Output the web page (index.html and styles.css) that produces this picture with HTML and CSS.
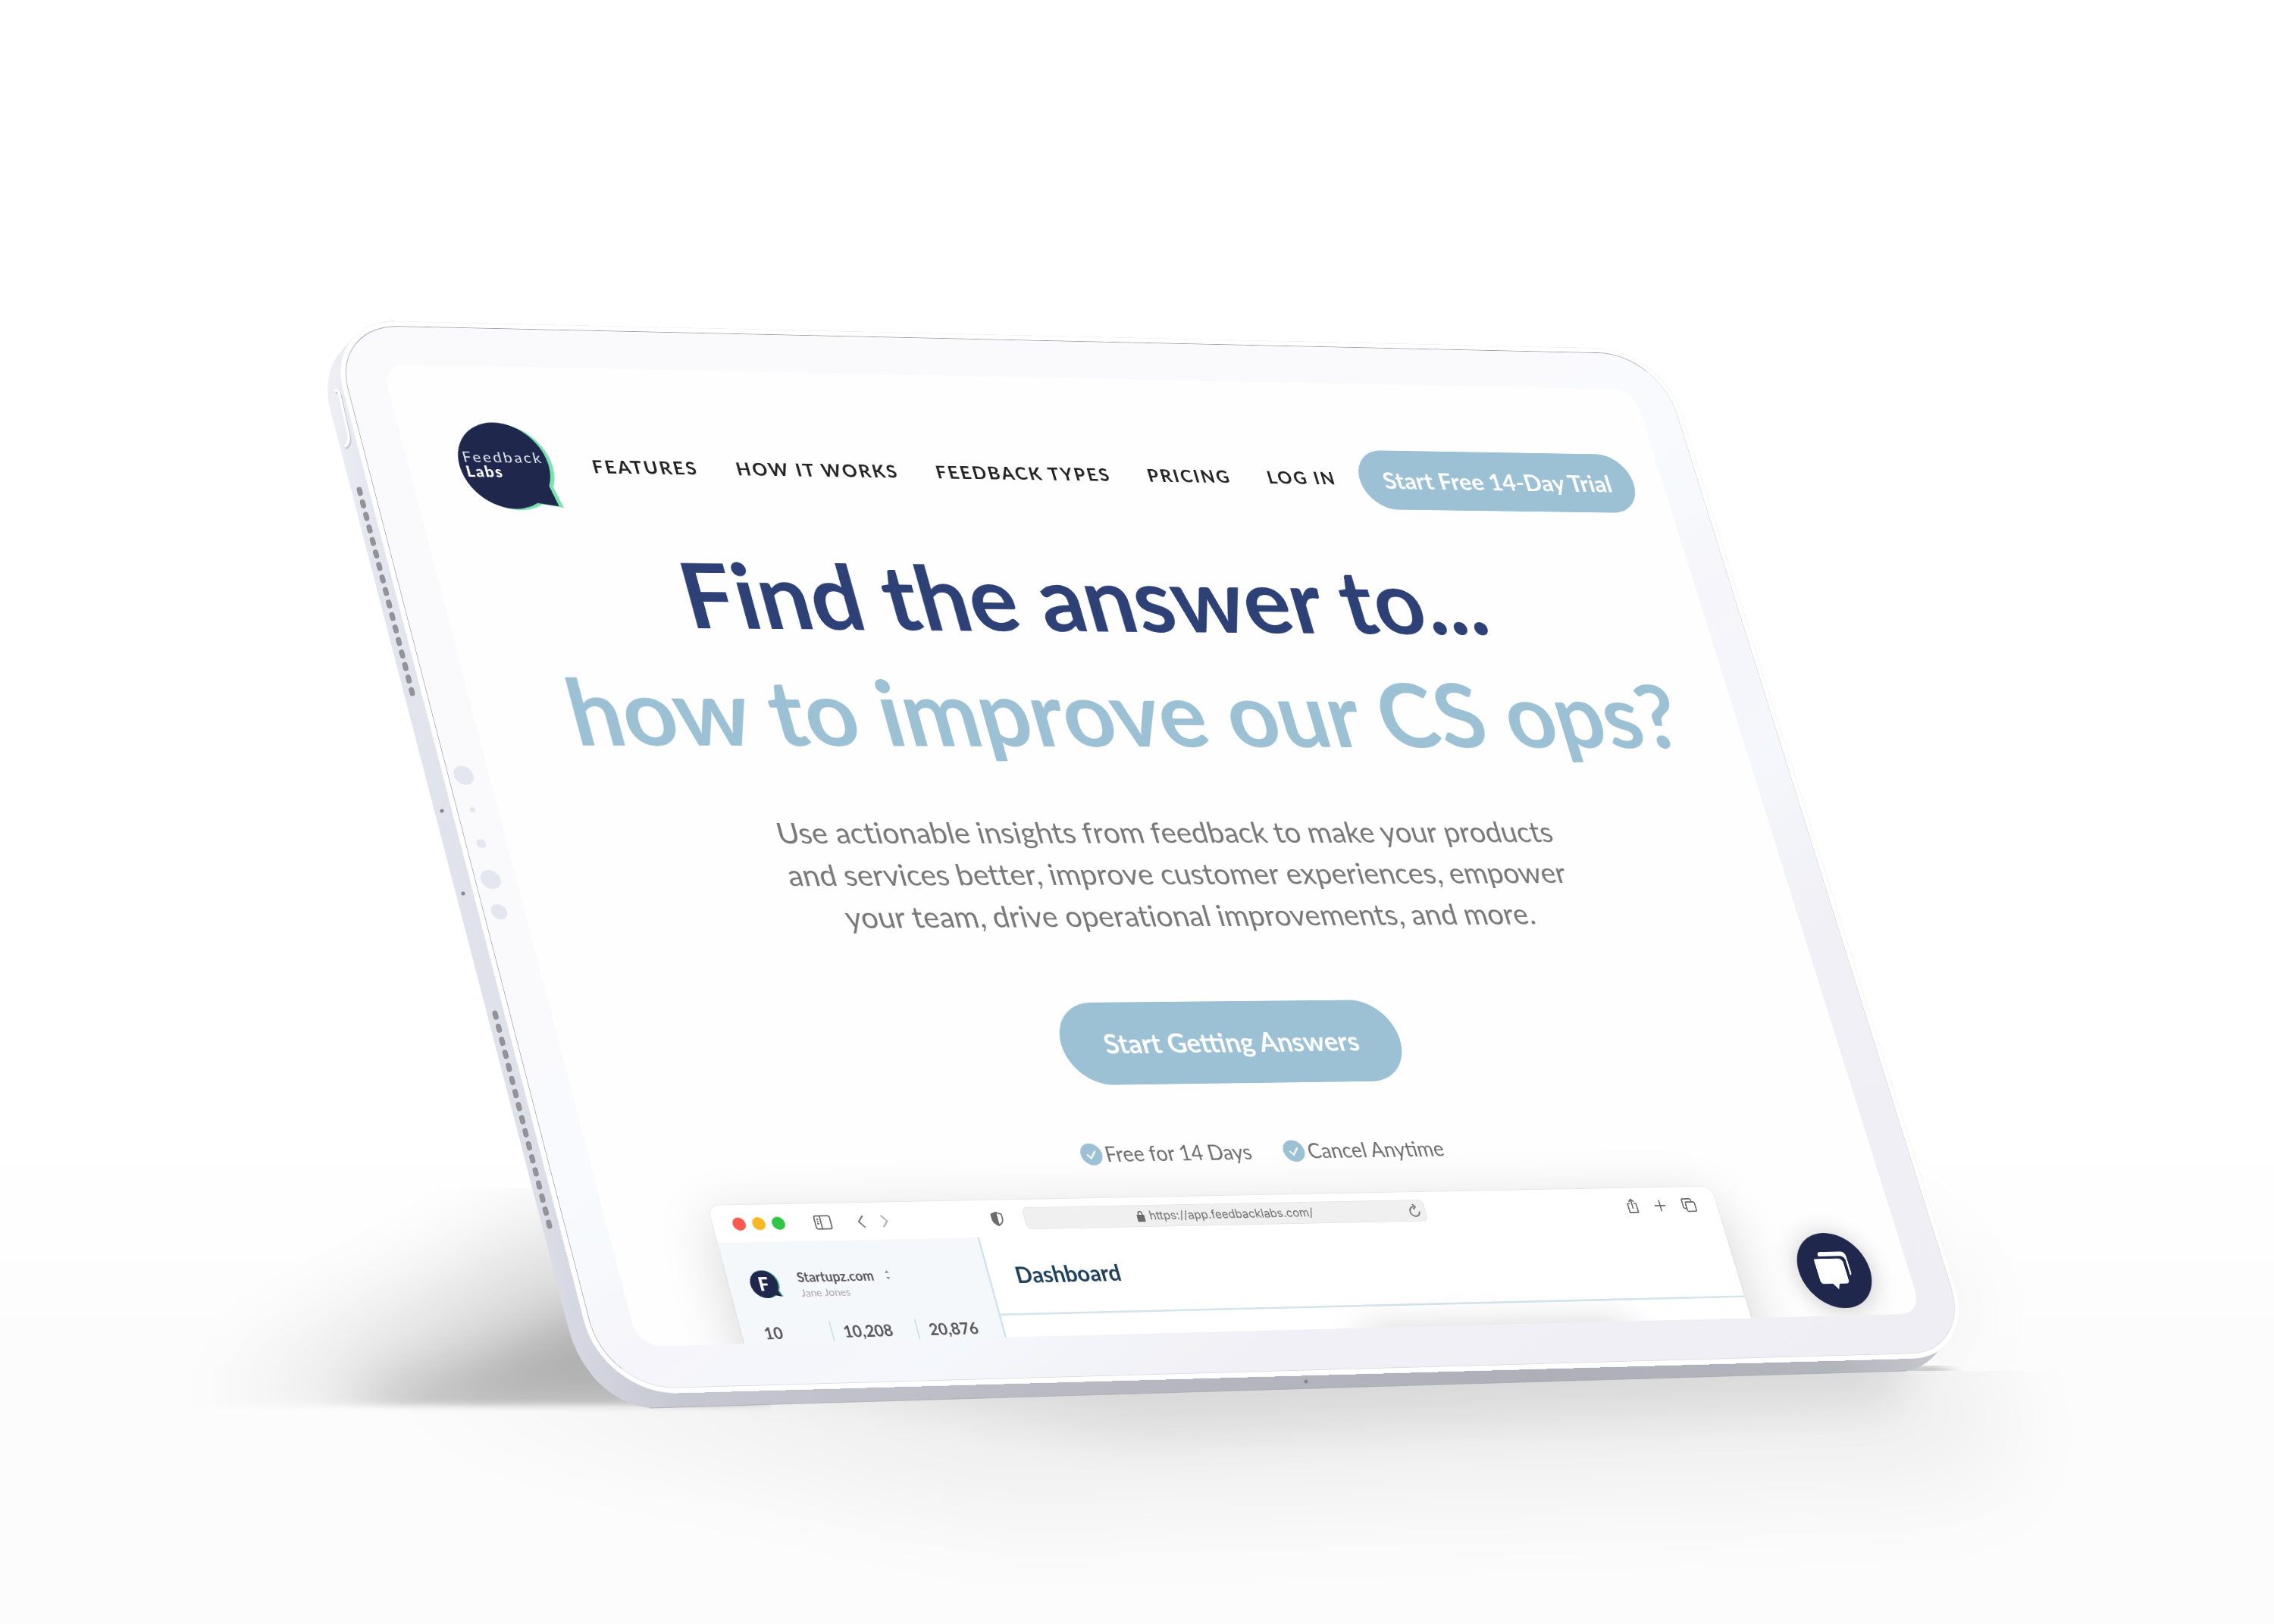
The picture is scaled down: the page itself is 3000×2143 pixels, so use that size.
FILE: index.html
```html
<!DOCTYPE html>
<html lang="en">
<head>
<meta charset="utf-8">
<meta name="viewport" content="width=device-width, initial-scale=1">
<title>Feedback Labs</title>
<link rel="stylesheet" href="styles.css">
</head>
<body>
<main class="scene">
  <div class="mockup">
    <svg class="body" viewBox="0 0 3000 2143" aria-hidden="true">
      <defs>
        <linearGradient id="metal" gradientUnits="userSpaceOnUse" x1="430" y1="0" x2="2570" y2="0">
          <stop offset="0" stop-color="#eef0f5"/>
          <stop offset=".03" stop-color="#e3e6ef"/>
          <stop offset=".12" stop-color="#dfe1ea"/>
          <stop offset=".15" stop-color="#d6d9e3"/>
          <stop offset=".22" stop-color="#c5c7d1"/>
          <stop offset=".5" stop-color="#b6b7c0"/>
          <stop offset=".75" stop-color="#aeafb8"/>
          <stop offset=".93" stop-color="#b3b5bd"/>
          <stop offset="1" stop-color="#c6c9cf"/>
        </linearGradient>
        <linearGradient id="ground" x1="0" y1="0" x2="0" y2="1">
          <stop offset="0" stop-color="#f9f9f9" stop-opacity="0"/>
          <stop offset=".5" stop-color="#fafafa" stop-opacity=".6"/>
          <stop offset="1" stop-color="#fcfcfc" stop-opacity=".8"/>
        </linearGradient>
        <filter id="soft70" x="-50%" y="-100%" width="200%" height="300%"><feGaussianBlur stdDeviation="70"/></filter>
        <filter id="soft30" x="-50%" y="-100%" width="200%" height="300%"><feGaussianBlur stdDeviation="34"/></filter>
        <filter id="soft3" x="-20%" y="-20%" width="140%" height="140%"><feGaussianBlur stdDeviation="4"/></filter>
        <clipPath id="above"><rect x="0" y="1200" width="3000" height="655"/></clipPath>
        <clipPath id="aboveRight"><rect x="2400" y="1200" width="600" height="609"/></clipPath>
        <clipPath id="below"><path d="M0 1858H857L2515 1809H3000V2143H0Z"/></clipPath>
      </defs>
      <rect y="1500" width="3000" height="643" fill="url(#ground)"/>
      <g filter="url(#soft3)">
        <g clip-path="url(#above)">
          <path d="M300 1860L520 1750L740 1620H1000V1860Z" fill="#000" opacity=".16" filter="url(#soft70)"/>
          <path d="M450 1850L620 1800L760 1740H1000V1880H540Z" fill="#000" opacity=".2" filter="url(#soft30)"/>
        </g>
      </g>
      <g clip-path="url(#aboveRight)">
        <path d="M2400 1560L2560 1680L2620 1780H2400Z" fill="#000" opacity=".05" filter="url(#soft70)"/>
        <path d="M2500 1804H2550L2590 1810H2500Z" fill="#000" opacity=".35" filter="url(#soft3)"/>
      </g>
      <g clip-path="url(#below)">
        <path d="M500 1820L2600 1740L2660 1960L1300 2000Z" fill="#000" opacity=".05" filter="url(#soft70)"/>
        <path d="M900 1800L1400 1700H2530L2500 1850L1500 1890Z" fill="#000" opacity=".1" filter="url(#soft30)"/>
      </g>
      <path d="M520 423C480 425 462 450 447 467C432 486 430 512 434 534L752 1760C768 1812 808 1853 857 1858L2515 1809C2536 1806 2556 1790 2570 1764L2400 1500L700 600Z" fill="url(#metal)"/>
      <path d="M857 1858L2515 1809" stroke="#9b9ba3" stroke-width="1" fill="none" opacity=".6"/>
      <path d="M442 517C446 514 448 518 449 522L461 576C462 582 460 588 455 590" fill="none" stroke="#c9ccd8" stroke-width="3" transform="translate(1 2)"/>
      <path d="M441 516C445 513 447 517 448 521L460 575C461 581 459 587 455 589" fill="none" stroke="#fff" stroke-width="3"/>
      <g class="speaker">
        <path d="M474 646L544 915" pathLength="163"/>
        <path d="M653 1337L725 1618" pathLength="163"/>
      </g>
      <g fill="#85868d">
        <circle cx="583" cy="1070" r="2.5"/><circle cx="611" cy="1179" r="2.5"/><circle cx="1723" cy="1823" r="2.5"/>
      </g>
    </svg>

    <div class="device">
      <div class="bezel">
        <svg class="sensors" viewBox="0 0 62 300" aria-hidden="true">
          <circle cx="23" cy="20" r="15"/><circle cx="23" cy="74" r="4"/><circle cx="23" cy="127" r="7"/><circle cx="23" cy="183" r="15"/><circle cx="23" cy="233" r="12"/>
        </svg>
        <div class="screen">
          <header class="site-header">
            <a class="logo" href="#" aria-label="Feedback Labs">
              <svg viewBox="0 0 150 142" width="150" height="142">
                <path d="M76 2a70 70 0 0 1 62 102l8 33-32-5A70 70 0 1 1 76 2Z" fill="#7be3ae"/>
                <path d="M70 0a70 70 0 0 1 62 102l7 33-32-5A70 70 0 1 1 70 0Z" fill="#1f284c"/>
                <text x="9" y="65" class="logo-light">Feedback</text>
                <text x="9" y="89" class="logo-bold">Labs</text>
              </svg>
            </a>
            <nav class="nav">
              <a href="#">FEATURES</a>
              <a href="#">HOW IT WORKS</a>
              <a href="#">FEEDBACK TYPES</a>
              <a href="#">PRICING</a>
              <a href="#">LOG IN</a>
            </nav>
            <button class="cta cta-small" type="button">Start Free 14-Day Trial</button>
          </header>

          <section class="hero">
            <h1><span class="ask">Find the answer to...</span><span class="topic">how to improve our CS ops?</span></h1>
            <p>Use actionable insights from feedback to make your products<br>and services better, improve customer experiences, empower<br>your team, drive operational improvements, and more.</p>
            <button class="cta cta-large" type="button">Start Getting Answers</button>
            <ul class="perks">
              <li><svg viewBox="0 0 34 34" width="34" height="34"><circle cx="17" cy="17" r="17" fill="#9dc1d4"/><path d="M10 17l5 6 9-11" fill="none" stroke="#fff" stroke-width="2.5"/></svg>Free for 14 Days</li>
              <li><svg viewBox="0 0 34 34" width="34" height="34"><circle cx="17" cy="17" r="17" fill="#9dc1d4"/><path d="M10 17l5 6 9-11" fill="none" stroke="#fff" stroke-width="2.5"/></svg>Cancel Anytime</li>
            </ul>
          </section>

          <section class="window">
            <div class="toolbar">
              <div class="tools-left">
                <span class="lights"><i class="red"></i><i class="amber"></i><i class="green"></i></span>
                <svg class="panel" viewBox="0 0 26 22" width="26" height="22"><rect x="1" y="1" width="24" height="20" rx="3"/><path d="M10 1v20M4 6h3M4 9.500h3M4 13h3"/></svg>
                <svg class="chev" viewBox="0 0 12 20" width="12" height="20"><path d="M10 1L2 10l8 9"/></svg>
                <svg class="chev fwd" viewBox="0 0 12 20" width="12" height="20"><path d="M2 1l8 9-8 9"/></svg>
                <svg class="shield" viewBox="0 0 18 22" width="18" height="22"><path d="M9 1l8 3v7c0 5-4 8-8 10-4-2-8-5-8-10V4Z"/><path d="M9 1v20C5 19 1 16 1 11V4Z" fill="#6b6b6b"/></svg>
              </div>
              <div class="address">
                <svg viewBox="0 0 12 18" width="12" height="18"><rect x="0" y="8" width="12" height="9" rx="1.500" fill="#6b6b6b"/><path d="M3 8V5a3 3 0 0 1 6 0v3" fill="none" stroke="#6b6b6b" stroke-width="1.800"/></svg>
                <input type="text" value="https://app.feedbacklabs.com/" aria-label="Address">
                <svg class="reload" viewBox="0 0 18 22" width="18" height="22"><path d="M9 5a7.500 7.500 0 1 0 7.500 7.500M8 1l4 4-4 4"/></svg>
              </div>
              <div class="tools-right">
                <svg viewBox="0 0 18 24" width="18" height="24"><path d="M6 8H2v14h14V8h-4M9 16V1M5 5l4-4 4 4"/></svg>
                <svg viewBox="0 0 18 18" width="18" height="18"><path d="M9 0v18M0 9h18"/></svg>
                <svg viewBox="0 0 22 22" width="22" height="22"><rect x="6" y="6" width="15" height="15" rx="2"/><path d="M6 16H3a2 2 0 0 1-2-2V3a2 2 0 0 1 2-2h11a2 2 0 0 1 2 2v3"/></svg>
              </div>
            </div>
            <div class="app">
              <aside class="sidebar">
                <div class="org">
                  <svg viewBox="0 0 48 44" width="48" height="44"><path d="M23 1a21 21 0 0 1 19 31l4 9-10-2A21 21 0 1 1 23 1Z" fill="#4fb98a"/><path d="M21 1a21 21 0 0 1 19 31l4 9-10-2A21 21 0 1 1 21 1Z" fill="#1f284c"/><text x="13" y="32" class="mark">F</text></svg>
                  <p><b>Startupz.com</b><small>Jane Jones</small></p>
                  <svg class="sort" viewBox="0 0 8 16" width="8" height="16"><path d="M1 5l3-4 3 4ZM1 11l3 4 3-4Z"/></svg>
                </div>
                <ul class="stats"><li>10</li><li>10,208</li><li>20,876</li></ul>
              </aside>
              <div class="content">
                <h2>Dashboard</h2>
                <div class="card"></div>
              </div>
            </div>
          </section>

          <button class="chat" type="button" aria-label="Open chat">
            <svg viewBox="0 0 64 64" width="64" height="64"><path d="M12 5q1-3 6-3h32q9 0 9 9v23q0 6-3 6V17q0-8-9-8H12Z" fill="#fff"/><path d="M5 13h38q8 0 8 8v26q0 6-6 6H34l-4 9-7-9H9q-6 0-6-6V16q0-3 2-3Z" fill="#fff"/></svg>
          </button>
        </div>
      </div>
    </div>
  </div>
</main>
</body>
</html>
```

FILE: styles.css
```css
* { box-sizing: border-box; }

body {
  margin: 0;
  background: #fff;
  font-family: Lato, "Open Sans", sans-serif;
  color: #777;
}

h1, h2, p, ul { margin: 0; padding: 0; font-weight: inherit; }
ul { list-style: none; }
a { color: inherit; text-decoration: none; }
button { border: 0; font: inherit; color: inherit; cursor: pointer; }

.scene {
  display: grid;
  justify-content: center;
  min-height: 100vh;
  overflow: hidden;
}

/* The artboard on which the tablet stands */
.mockup { position: relative; width: 3000px; height: 2143px; }
.body { position: absolute; inset: 0; width: 100%; height: 100%; }

.speaker {
  fill: none;
  stroke: #929298;
  stroke-width: 7;
  stroke-linecap: round;
  stroke-dasharray: 3 7;
}

/* The front face, tilted in perspective as one plane */
.device {
  position: absolute;
  left: -70px;
  top: -70px;
  padding: 7px;
  border-radius: 110px;
  background: #fff;
  box-shadow: 0 0 0 1px #f3f3f6;
  transform-origin: 70px 70px;
  transform: matrix3d(0.871118, 0.031851, 0, 0.0000301465, 0.198522, 0.798646, 0, -0.0000255664, 0, 0, 1, 0, 504, 480.5, 0, 1);
}

.bezel {
  position: relative;
  padding: 62px;
  border: 1px solid #dcdce4;
  border-top-color: #a0a0a9;
  border-left-color: #b0b0b9;
  border-radius: 103px;
  background: linear-gradient(150deg, #fafafd 0%, #fafafd 40%, #f7fafd 50%, #f6f5fb 56%, #f4f7fb 66%, #f1f0f6 76%, #efeef4 100%);
}

.sensors { position: absolute; left: 0; top: 700px; width: 62px; height: 300px; fill: #e5e7f0; }

.screen {
  position: relative;
  width: 2048px;
  height: 1536px;
  overflow: hidden;
  border-radius: 36px;
  background: #fefefe;
}

.site-header {
  display: flex;
  align-items: center;
  height: 234px;
  padding: 92px 51px 0 78px;
}
.logo { margin-right: 58px; }
.logo svg { display: block; }
.logo-light { font-size: 24px; font-weight: 400; letter-spacing: 3px; fill: #e8eaf2; }
.logo-bold { font-size: 24px; font-weight: 900; letter-spacing: 2px; fill: #fff; }

.nav {
  display: flex;
  flex: 1;
  gap: 61px;
  padding-bottom: 6px;
  font-size: 29px;
  font-weight: 700;
  letter-spacing: 3px;
  white-space: nowrap;
  color: #222;
}

.cta {
  background: #9dc1d4;
  color: #fff;
  font-weight: 700;
  white-space: nowrap;
}
.cta-small { width: 467px; height: 100px; border-radius: 50px; font-size: 39px; }
.cta-large { width: 546px; height: 130px; border-radius: 65px; font-size: 42px; }

.hero { padding: 38px 0 0 46px; text-align: center; }
.hero h1 {
  margin-bottom: 67px;
  font-size: 145px;
  line-height: 188px;
  font-weight: 700;
  white-space: nowrap;
}
.hero h1 span { display: block; }
.ask { padding-right: 46px; color: #2d4177; }
.topic { color: #9dc1d4; }

.hero p {
  margin-bottom: 104px;
  font-size: 47px;
  line-height: 67px;
  font-variant-ligatures: none;
}

.perks {
  display: flex;
  justify-content: center;
  gap: 52px;
  margin-top: 88px;
  font-size: 32px;
  line-height: 40px;
  color: #6c6c6c;
}
.perks li { display: flex; align-items: center; gap: 5px; }

.window {
  width: 1600px;
  height: 900px;
  margin: 48px 0 0 160px;
  border-radius: 16px;
  background: #fff;
  box-shadow: 0 24px 90px rgba(0, 0, 0, .16), 0 0 2px rgba(0, 0, 0, .15);
}

.toolbar {
  display: grid;
  grid-template-columns: 1fr 640px 1fr;
  align-items: center;
  height: 57px;
}
.toolbar svg { fill: none; stroke: #6b6b6b; stroke-width: 2; }
.tools-left { display: flex; align-items: center; padding-left: 30px; }
.lights { display: flex; gap: 10px; margin-right: 45px; }
.lights i { width: 20px; height: 20px; border-radius: 50%; }
.red { background: #fb5a50; }
.amber { background: #f7b927; }
.green { background: #33c546; }
.panel { margin-right: 40px; }
.chev { margin-right: 24px; }
.toolbar .fwd { margin-right: 160px; stroke: #a5a5a5; }

.address {
  position: relative;
  display: flex;
  align-items: center;
  justify-content: center;
  gap: 8px;
  height: 34px;
  border: 1px solid #e6e6e6;
  border-radius: 8px;
  background: #f0f0f0;
}
.address input {
  width: 266px;
  padding: 0;
  border: 0;
  background: none;
  font: 18px/24px Inter, sans-serif;
  color: #6b6b6b;
}
.address .reload { position: absolute; right: 8px; }

.tools-right { display: flex; align-items: center; justify-content: flex-end; gap: 28px; padding-right: 35px; }

.app { display: flex; height: 843px; }
.sidebar {
  width: 402px;
  padding: 42px 0 0 32px;
  border-right: 3px solid #d3e4ec;
  background: #f4f8fb;
}
.org { display: flex; align-items: flex-start; height: 68px; }
.org p { margin: 0 18px 0 26px; font-size: 20px; line-height: 24px; }
.org b, .org small { display: block; }
.org b { font-size: 20px; color: #555; }
.org small { font-size: 16px; color: #a8a8a8; }
.sort { margin-top: 4px; fill: #888; }
.mark { font-size: 28px; font-weight: 900; fill: #fff; }

.stats { display: flex; margin-top: 12px; font-size: 24px; line-height: 32px; font-weight: 700; color: #555; }
.stats li { width: 132px; height: 80px; padding-left: 17px; }
.stats li:first-child { width: 104px; padding-left: 2px; }
.stats li + li { border-left: 2px solid #cfe0e9; }

.content { flex: 1; overflow: hidden; }
.content h2 {
  height: 120px;
  padding: 38px 0 0 40px;
  border-bottom: 3px solid #d6e5ed;
  font-size: 34px;
  line-height: 40px;
  font-weight: 700;
  color: #1f3f5b;
}
.card { width: 430px; height: 300px; margin: 46px 0 0 565px; box-shadow: 0 0 60px rgba(0, 0, 0, .24); }

.chat {
  position: absolute;
  right: 65px;
  bottom: 12px;
  display: grid;
  place-items: center;
  width: 120px;
  height: 120px;
  border-radius: 50%;
  background: #1f284c;
  box-shadow: 0 4px 40px rgba(0, 0, 0, .22);
}
```
